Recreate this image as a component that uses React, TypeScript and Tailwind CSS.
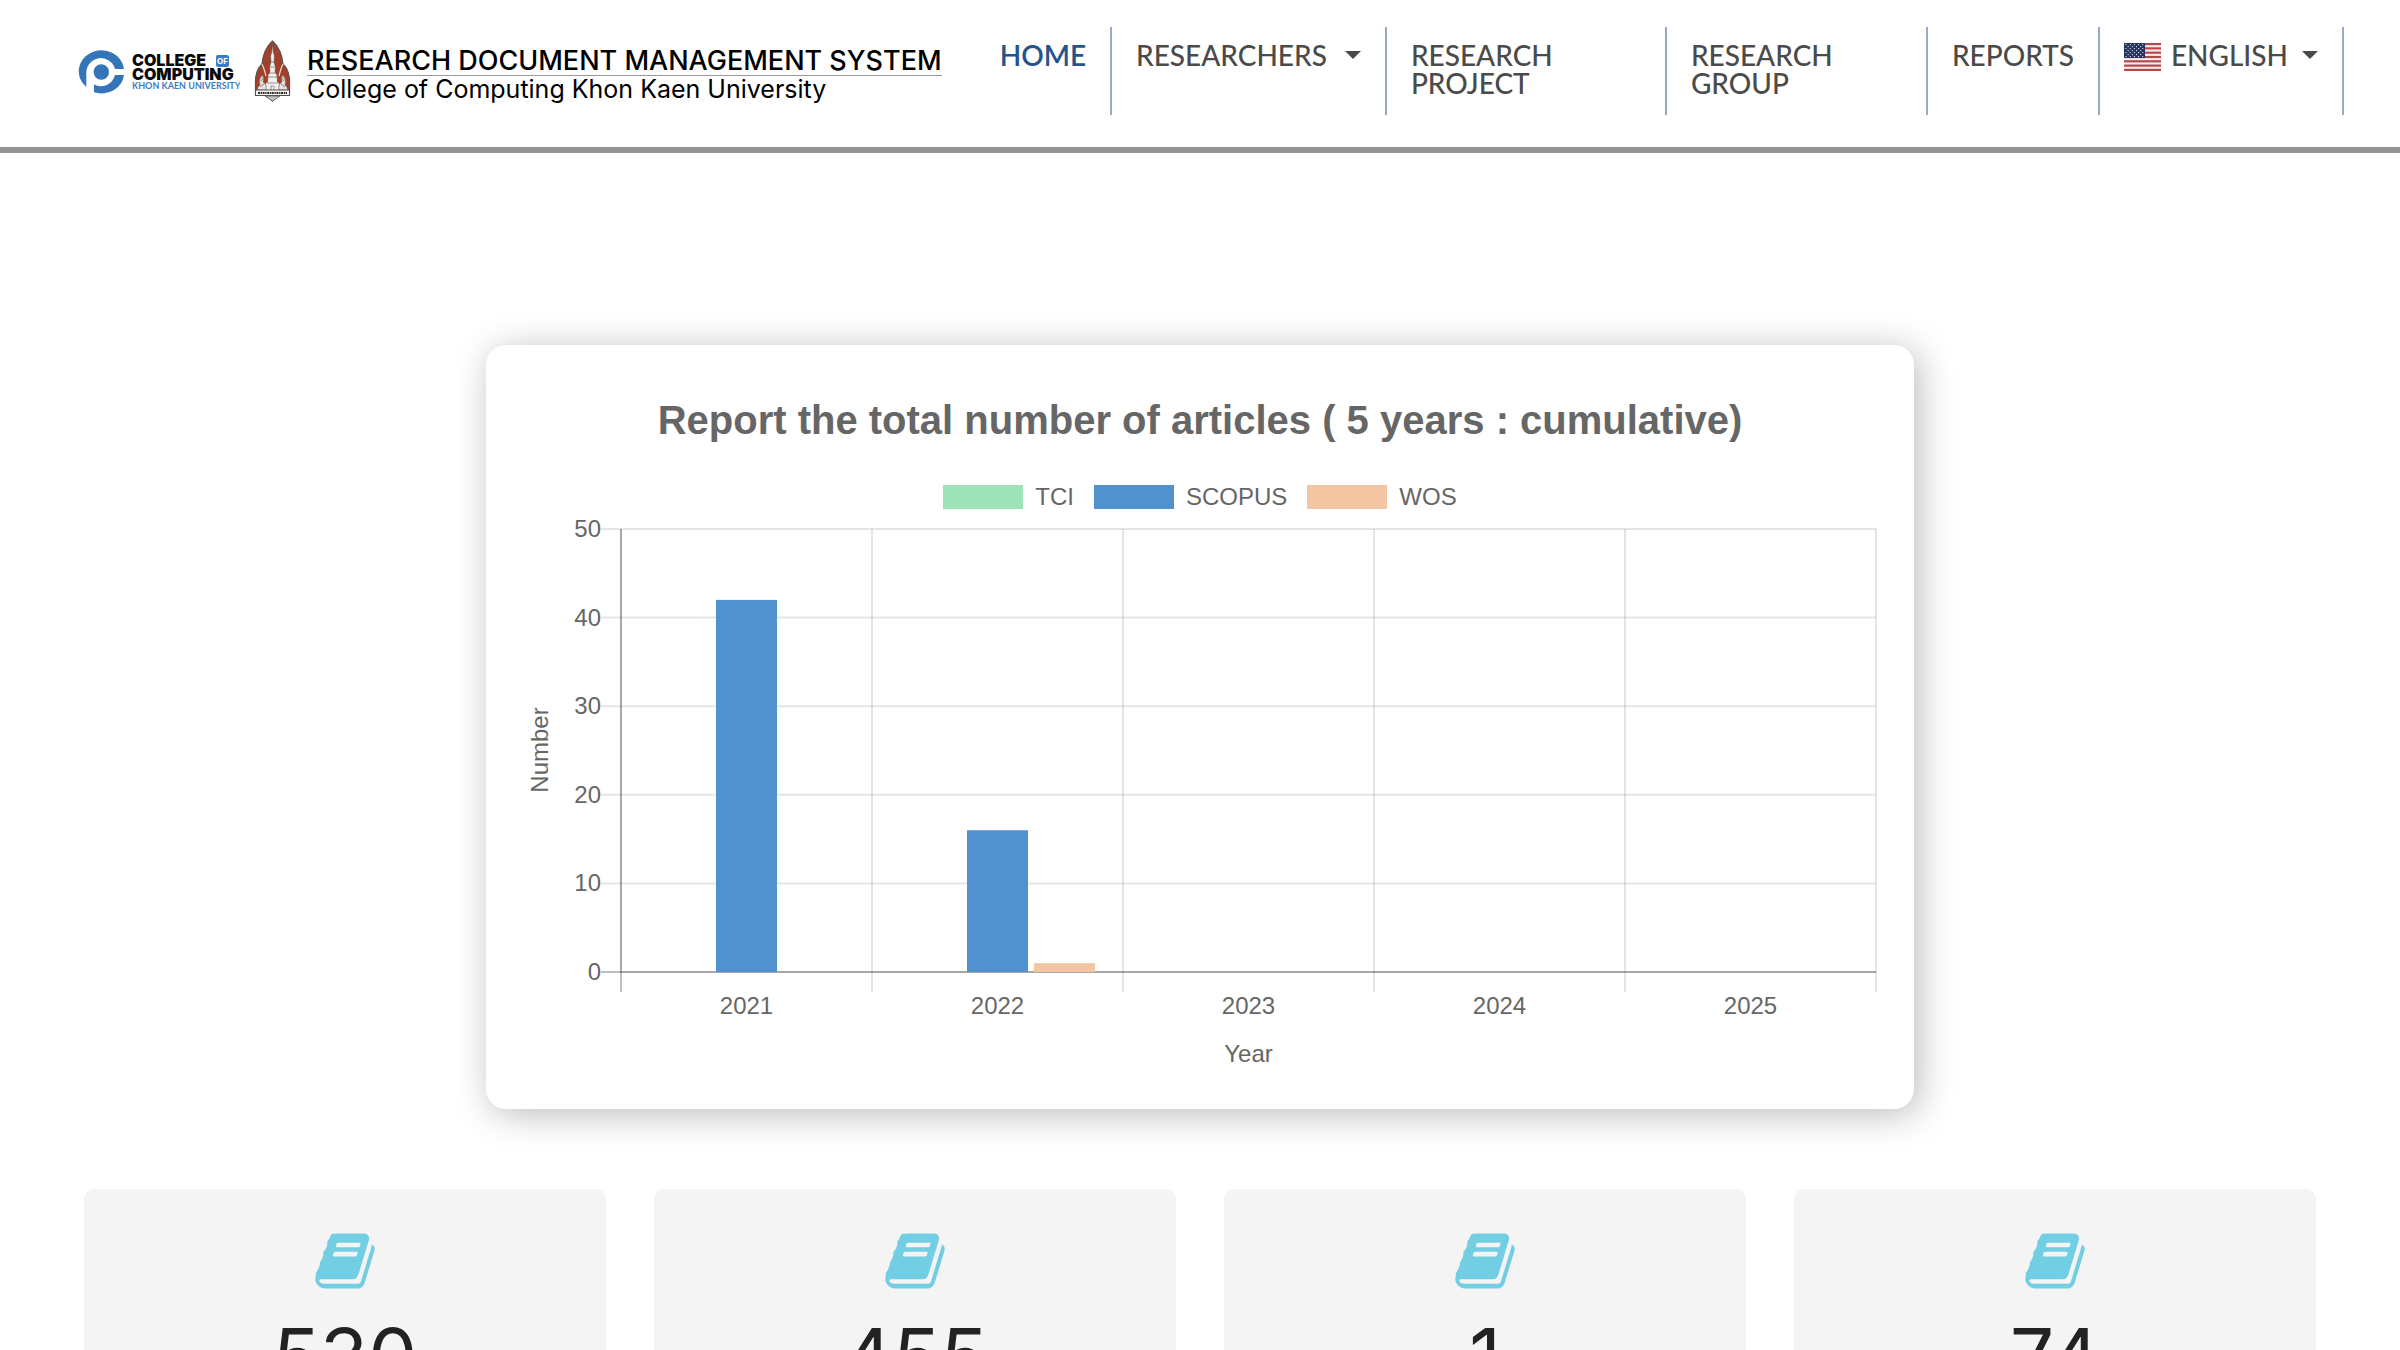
import type { ReactNode } from "react";

const YEARS = ["2021", "2022", "2023", "2024", "2025"];
const SERIES = [
  { name: "TCI", fill: "#9de2b9", swatch: "bg-[#9de2b9]", values: [0, 0, 0, 0, 0] },
  { name: "SCOPUS", fill: "#5191d0", swatch: "bg-[#5191d0]", values: [42, 16, 0, 0, 0] },
  { name: "WOS", fill: "#f3c5a2", swatch: "bg-[#f3c5a2]", values: [0, 1, 0, 0, 0] },
];
const TOTALS = [530, 455, 1, 74];

function CollegeLogo() {
  return (
    <svg viewBox="0 0 162 46" className="h-[46px] w-[162px] shrink-0" role="img" aria-label="College of Computing">
      <path d="M46 21 H37 A14.600 14.600 0 0 0 8.300 24 V39 A22.700 21 0 1 1 46 21 Z" fill="#3474b9" />
      <path d="M46 27 A22.700 20.500 0 0 1 16 44.300 V36.500 A14.600 14.600 0 0 0 37 27 Z" fill="#3474b9" />
      <circle cx="23.300" cy="24" r="7.700" fill="#3474b9" />
      <text x="54" y="18" fontFamily="Inter, sans-serif" fontSize="16" fontWeight="900" fill="#0a0a0a">COLLEGE</text>
      <rect x="138" y="7" width="13" height="12" rx="2" fill="#3b7dc4" />
      <text x="144.500" y="16" textAnchor="middle" fontFamily="Inter, sans-serif" fontSize="8" fontWeight="700" fill="#fff">OF</text>
      <text x="54" y="32" fontFamily="Inter, sans-serif" fontSize="16" fontWeight="900" fill="#0a0a0a">COMPUTING</text>
      <text x="54" y="41" fontFamily="Lato, sans-serif" fontSize="9" fontWeight="700" fill="#3b7dc4">KHON KAEN UNIVERSITY</text>
    </svg>
  );
}

function Emblem() {
  return (
    <svg viewBox="0 0 37 62" className="h-[62px] w-[37px] shrink-0" role="img" aria-label="Khon Kaen University emblem">
      <path
        d="M18.500 1 C24 6 28 14 29 24 C34 29 36 35 35.500 44 V54 H26 L18.500 61 L11 54 H1.500 V44 C1 35 3 29 8 24 C9 14 13 6 18.500 1 Z"
        fill="#a2402a"
        stroke="#5d5450"
        strokeWidth="1.200"
      />
      <path d="M8 24 Q10 28 12 36 M29 24 Q27 28 25 36" fill="none" stroke="#e8dfda" strokeWidth="1.200" />
      <path
        d="M18.500 4 L19.300 12 L20.500 16 L20 22 L21.500 27 L21 32 L23 35 L23.500 42 L26 44 V51 H11 V44 L13.500 42 L14 35 L16 32 L15.500 27 L17 22 L16.500 16 L17.700 12 Z"
        fill="#f2efed"
        stroke="#55504e"
        strokeWidth="0.600"
      />
      <path d="M16 27 H21 M15 33 H22 M14 37 H23 M16.500 22 H20.500 M13 43 H24 M17 51 V46 H20 V51" stroke="#77706d" strokeWidth="0.700" fill="none" />
      <path
        d="M3 50 Q4 46 6 45 Q4 40 8 35 Q11 38 9 42 Q13 44 12 50 Z M34 50 Q33 46 31 45 Q33 40 29 35 Q26 38 28 42 Q24 44 25 50 Z"
        fill="#e9e4e1"
        stroke="#5d5450"
        strokeWidth="0.600"
      />
      <path d="M6 47 L10 44 M7 41 L9 38 M31 47 L27 44 M30 41 L28 38" stroke="#5d5450" strokeWidth="0.700" />
      <rect x="1.500" y="50" width="34" height="5.500" fill="#f7f5f4" stroke="#55504e" strokeWidth="1" />
      <path d="M4 53 H33" stroke="#2e2b2a" strokeWidth="2" strokeDasharray="2 0.700 1.300 0.600" />
      <path d="M11 56 H26 L18.500 61 Z" fill="#c9c5c3" stroke="#5d5450" strokeWidth="0.800" />
    </svg>
  );
}

function UsFlag() {
  const stars: ReactNode[] = [];
  for (let r = 0; r < 7; r++) {
    for (let c = 0; c < (r % 2 ? 4 : 5); c++) {
      stars.push(<circle key={`${r}-${c}`} cx={2 + c * 4.2 + (r % 2 ? 2.1 : 0)} cy={1.6 + r * 2} r="0.600" fill="#fff" />);
    }
  }
  return (
    <svg viewBox="0 0 37 28" className="mt-0.5 h-7 w-[37px] shrink-0" aria-hidden="true">
      <rect width="37" height="28" fill="#f4ecec" />
      {[0, 1, 2, 3, 4, 5, 6].map((i) => (
        <rect key={i} y={(i * 56) / 13} width="37" height={28 / 13} fill="#b94648" />
      ))}
      <rect width="21" height="15" fill="#25335f" />
      {stars}
    </svg>
  );
}

function Caret() {
  return (
    <svg viewBox="0 0 16 8" className="mt-2.5 ml-1 h-2 w-4 shrink-0" aria-hidden="true">
      <path d="M0 0 H16 L8 8 Z" fill="currentColor" />
    </svg>
  );
}

function BookIcon() {
  return (
    <svg viewBox="0 0 1792 1792" className="size-16" fill="#72cee3" aria-hidden="true">
      <path d="M1703 478q40 57 18 129l-275 906q-19 64-76.500 107.500t-122.500 43.500h-923q-77 0-148.500-53.500t-99.500-131.500q-24-67-2-127 0-4 3-27t4-37q1-8-3-21.500t-3-19.500q2-11 8-21t16.500-23.500 16.500-23.500q23-38 45-91.500t30-91.500q3-10 .5-30t-.5-28q3-11 17-28t17-23q21-36 42-92t25-90q1-9-2.500-32t.5-28q4-13 22-30.500t22-22.500q19-26 42.500-84.500t27.500-96.500q1-8-3-25.500t-2-26.500q2-8 9-18t18-23 17-21q8-12 16.500-30.500t15-35 16-36 19.500-32 26.500-23.500 36-11.500 47.500 5.500l-1 3q38-9 51-9h761q74 0 114 56t18 130l-274 906q-36 119-71.500 153.500t-128.500 34.500h-869q-27 0-38 15-11 16-1 43 24 70 144 70h923q29 0 56-15.500t35-41.500l300-987q7-22 5-57 38 15 59 43zm-1064 2q-4 13 2 22.500t20 9.500h608q13 0 25.500-9.500t16.500-22.500l21-64q4-13-2-22.500t-20-9.500h-608q-13 0-25.500 9.500t-16.500 22.500zm-83 256q-4 13 2 22.500t20 9.500h608q13 0 25.500-9.500t16.500-22.500l21-64q4-13-2-22.500t-20-9.500h-608q-13 0-25.500 9.500t-16.500 22.500z" />
    </svg>
  );
}

function ArticlesChart() {
  const left = 135;
  const right = 1390;
  const top = 20;
  const bottom = 463;
  const step = (right - left) / YEARS.length;
  const yOf = (v: number) => bottom - ((bottom - top) * v) / 50;
  return (
    <svg
      viewBox="0 0 1428 600"
      className="block w-full"
      fontFamily="Liberation Sans, Arial, sans-serif"
      fontSize="24"
      fill="#666"
      role="img"
      aria-label="Number of articles by year"
    >
      {[0, 10, 20, 30, 40, 50].map((v) => (
        <g key={v}>
          <line x1="115" x2={right} y1={yOf(v)} y2={yOf(v)} stroke="#000" strokeOpacity={v ? 0.1 : 0.25} strokeWidth="2" />
          <text x="115" y={yOf(v) + 8} textAnchor="end">{v}</text>
        </g>
      ))}
      {[0, 1, 2, 3, 4, 5].map((i) => (
        <line key={i} x1={left + i * step} x2={left + i * step} y1={top} y2="483" stroke="#000" strokeOpacity={i ? 0.1 : 0.25} strokeWidth="2" />
      ))}
      <path d={`M${left} ${top} V${bottom} H${right}`} fill="none" stroke="#000" strokeOpacity="0.120" strokeWidth="2" />
      {YEARS.map((year, i) => (
        <g key={year}>
          {SERIES.map((s, j) =>
            s.values[i] > 0 ? (
              <rect key={s.name} x={left + i * step + 28 + j * 67} y={yOf(s.values[i])} width="61" height={bottom - yOf(s.values[i])} fill={s.fill} />
            ) : null
          )}
          <text x={left + (i + 0.5) * step} y="505" textAnchor="middle">{year}</text>
        </g>
      ))}
      <text x={(left + right) / 2} y="553" textAnchor="middle">Year</text>
      <text transform="translate(62 241) rotate(-90)" textAnchor="middle">Number</text>
    </svg>
  );
}

const navItem = "flex border-r-2 border-[#9aaac0] px-6 pt-3.5 pb-4.5 text-left";

export default function App() {
  return (
    <div className="h-screen overflow-hidden bg-white font-['Lato',sans-serif] text-[#4a4a4a]">
      <header className="flex items-start border-b-6 border-[#949494] pt-[27px] pr-14 pb-8 pl-[78px]">
        <a href="#home" className="mt-3 flex items-center gap-3.5 text-black">
          <CollegeLogo />
          <Emblem />
          <span className="mt-2 ml-0.5 font-['Inter',sans-serif] whitespace-nowrap">
            <span className="block border-b border-[#999999] text-[27px] leading-7 font-medium">RESEARCH DOCUMENT MANAGEMENT SYSTEM</span>
            <span className="block text-[25px] leading-[26px]">College of Computing Khon Kaen University</span>
          </span>
        </a>
        <nav className="ml-auto flex text-[28px] leading-7 font-medium">
          <a href="#home" className={`${navItem} font-semibold text-[#24548c]`}>HOME</a>
          <button type="button" className={`${navItem} gap-3.5`}>RESEARCHERS<Caret /></button>
          <a href="#project" className={`${navItem} w-[280px]`}>RESEARCH PROJECT</a>
          <a href="#group" className={`${navItem} w-[261px]`}>RESEARCH GROUP</a>
          <a href="#reports" className={navItem}>REPORTS</a>
          <button type="button" className={`${navItem} gap-2.5`}><UsFlag />ENGLISH<Caret /></button>
        </nav>
      </header>

      <main className="px-[84px] pt-48">
        <section className="mx-auto max-w-[1428px] rounded-[20px] bg-white pt-[51px] font-['Liberation_Sans',Arial,sans-serif] text-[#666666] shadow-[5px_5px_36px_rgba(0,0,0,0.27)]">
          <h2 className="text-center text-[40px] leading-12 font-bold">Report the total number of articles ( 5 years : cumulative)</h2>
          <ul className="mt-[41px] flex justify-center gap-5 text-2xl leading-6">
            {SERIES.map((s) => (
              <li key={s.name} className="flex gap-3">
                <span className={`h-6 w-20 ${s.swatch}`} />
                {s.name}
              </li>
            ))}
          </ul>
          <ArticlesChart />
        </section>

        <section className="mt-20 grid grid-cols-4 gap-12">
          {TOTALS.map((n) => (
            <div key={n} className="flex flex-col items-center rounded-[10px] bg-[#f4f4f4] pt-10 pb-16">
              <BookIcon />
              <p className="mt-6 font-['Inter',sans-serif] text-[78px] leading-20 text-[#222222]">{n}</p>
            </div>
          ))}
        </section>
      </main>
    </div>
  );
}
